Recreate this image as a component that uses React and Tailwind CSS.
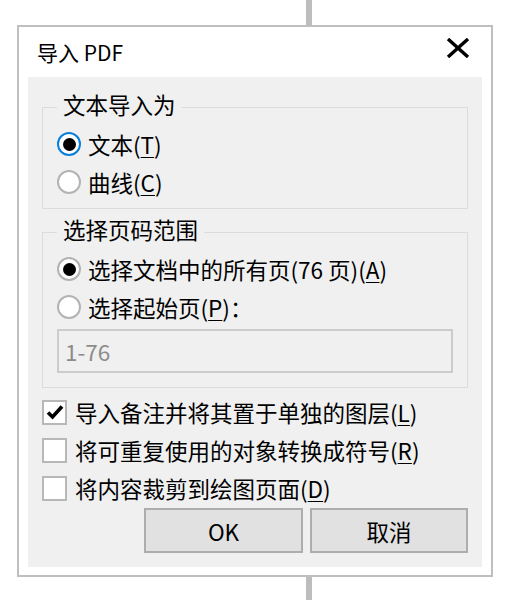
import React from 'react';

const Radio = ({ checked, focused }) => (
    <span
        className={
            'flex items-center justify-center w-[24px] h-[24px] rounded-full border-2 bg-white shrink-0 ' +
            (focused ? 'border-[#0a7fd8]' : 'border-[#b3b3b3]')
        }
    >
        {checked && <span className="block w-[13px] h-[13px] rounded-full bg-black"></span>}
    </span>
);

const Checkbox = ({ checked }) => (
    <span className="flex items-center justify-center w-[25px] h-[25px] border-2 border-[#b8b8b8] bg-white shrink-0">
        {checked && (
            <svg width="18" height="16" viewBox="0 0 18 16">
                <path d="M2 8.5 L6.5 13 L16 2.5" fill="none" stroke="black" strokeWidth="3.6" />
            </svg>
        )}
    </span>
);

const Key = ({ k }) => <span className="underline underline-offset-[3px] decoration-1">{k}</span>;

const RadioRow = ({ checked, focused, children }) => (
    <label className="flex items-center h-[38px] gap-[7px]">
        <Radio checked={checked} focused={focused} />
        <span>{children}</span>
    </label>
);

const CheckRow = ({ checked, children }) => (
    <label className="flex items-center h-[38px] gap-[8px]">
        <Checkbox checked={checked} />
        <span>{children}</span>
    </label>
);

const App = () => {
    return (
        <div className="w-[505px] h-[600px] bg-white flex flex-col font-['Noto_Sans_CJK_SC','Microsoft_YaHei',sans-serif] text-black">
            <div className="ml-[306px] w-[6px] h-[25px] bg-[#bdbdbd]"></div>

            <div className="ml-[17px] w-[476px] h-[552px] border-2 border-[#bfbfbf] bg-white flex flex-col">
                {/* title bar */}
                <div className="h-[50px] flex justify-between">
                    <div className="pl-[18px] pt-[11px] text-[21px] leading-[28px]">导入 PDF</div>
                    <div className="pr-[20px] pt-[11px]">
                        <svg width="26" height="20" viewBox="0 0 26 20">
                            <path d="M3 1 L23 19 M23 1 L3 19" stroke="black" strokeWidth="3.4" fill="none" />
                        </svg>
                    </div>
                </div>

                <div className="mx-[9px] h-[490px] bg-[#f0f0f0] px-[14px] pt-[12px] text-[22.5px] leading-[30px]">
                    <fieldset className="border border-[#dcdcdc] pl-[14px] pr-[14px] pb-[7px]">
                        <legend className="px-[6px] pb-[6px] leading-[30px]">文本导入为</legend>
                        <RadioRow checked focused>
                            文本(<Key k="T" />)
                        </RadioRow>
                        <RadioRow>
                            曲线(<Key k="C" />)
                        </RadioRow>
                    </fieldset>

                    <fieldset className="mt-[5px] border border-[#dcdcdc] pl-[14px] pr-[14px] pb-[14px]">
                        <legend className="px-[6px] pb-[6px] leading-[30px]">选择页码范围</legend>
                        <RadioRow checked>
                            选择文档中的所有页(76 页)(<Key k="A" />)
                        </RadioRow>
                        <RadioRow>
                            选择起始页(<Key k="P" />)：
                        </RadioRow>
                        <div className="mt-[3px] h-[44px] border-2 border-[#cccccc] flex items-center px-[6px] text-[#8c8c8c]">
                            1-76
                        </div>
                    </fieldset>

                    <div className="mt-[5px] flex flex-col">
                        <CheckRow checked>
                            导入备注并将其置于单独的图层(<Key k="L" />)
                        </CheckRow>
                        <CheckRow>
                            将可重复使用的对象转换成符号(<Key k="R" />)
                        </CheckRow>
                        <CheckRow>
                            将内容裁剪到绘图页面(<Key k="D" />)
                        </CheckRow>
                    </div>

                    <div className="mt-[1px] flex justify-end gap-[7px]">
                        <button className="w-[159px] h-[45px] border-2 border-[#adadad] bg-[#e1e1e1] text-[22.5px]">OK</button>
                        <button className="w-[158px] h-[45px] border-2 border-[#adadad] bg-[#e1e1e1] text-[22.5px]">取消</button>
                    </div>
                </div>
            </div>

            <div className="ml-[306px] w-[6px] flex-1 bg-[#bdbdbd]"></div>
        </div>
    );
};

export default App;
